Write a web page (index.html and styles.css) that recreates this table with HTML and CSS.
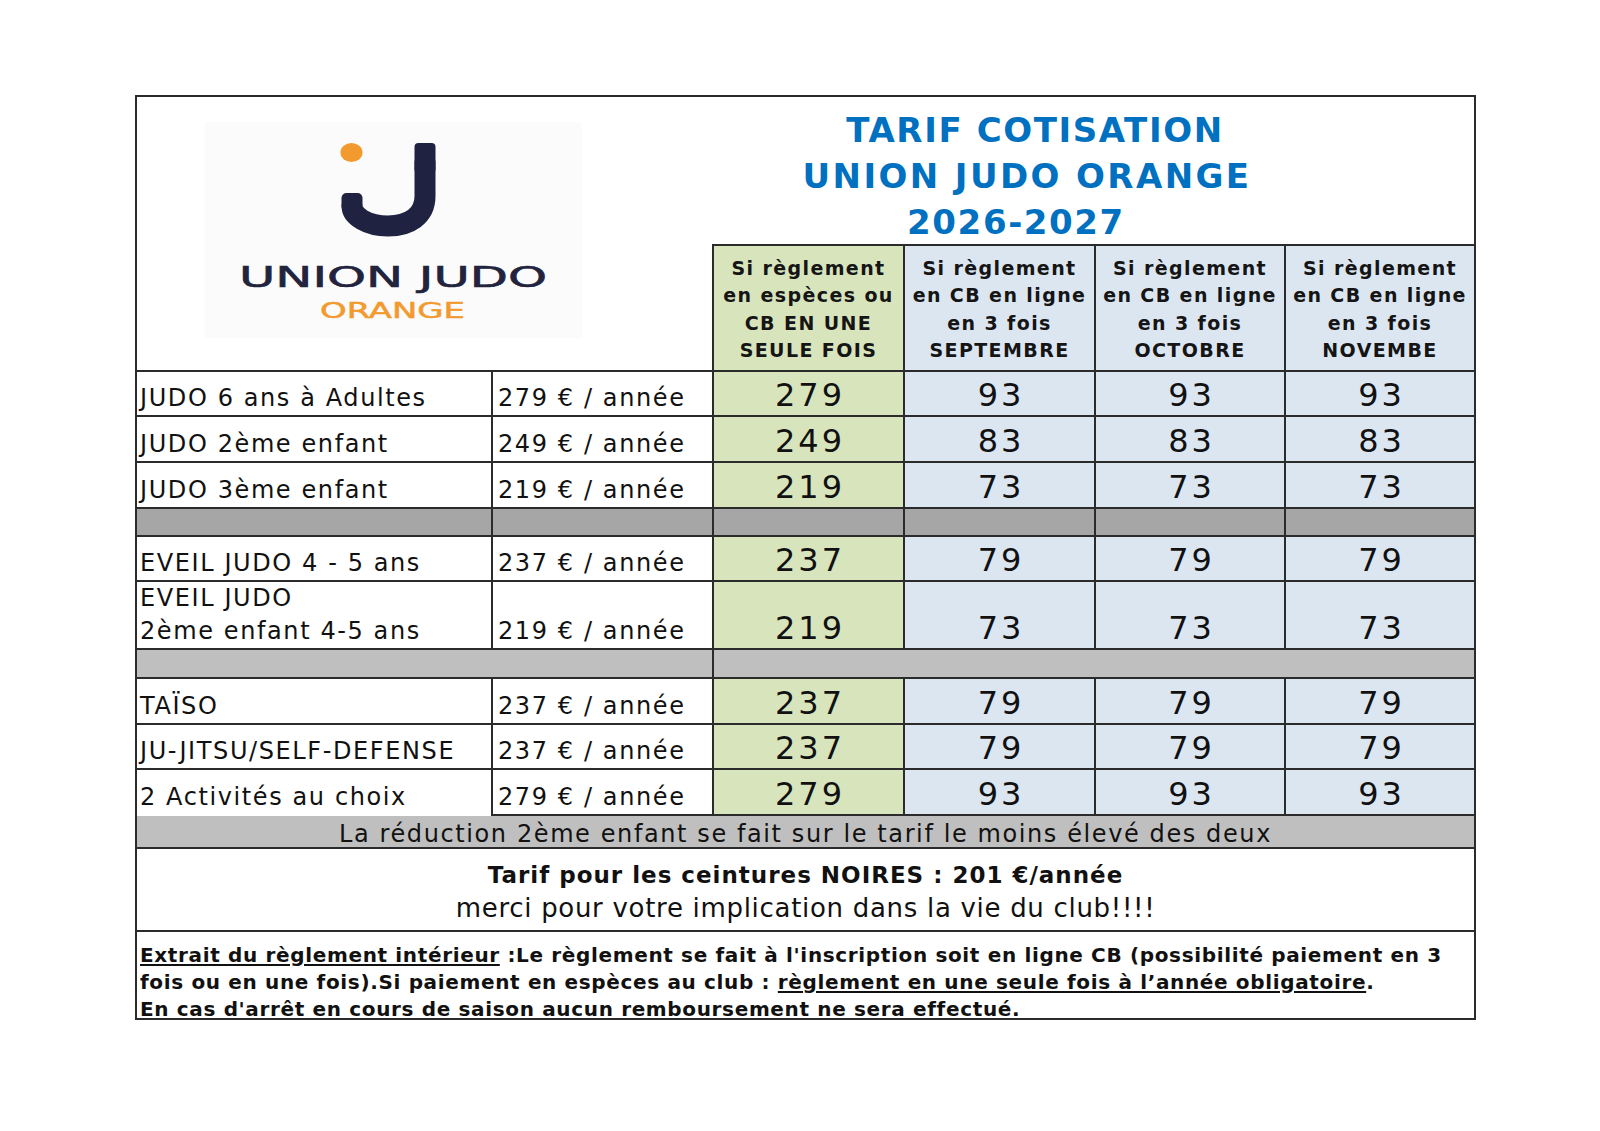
FILE: index.html
```html
<!DOCTYPE html>
<html lang="fr">
<head>
<meta charset="utf-8">
<title>Tarif cotisation Union Judo Orange 2026-2027</title>
<link rel="stylesheet" href="styles.css">
</head>
<body>
<div class="page">
  <div class="sheet">
    <div class="logo-cell">
      <div class="logo">
        <svg class="logo-svg" width="377" height="216" viewBox="0 0 377 216" aria-label="Union Judo Orange">
          <ellipse cx="146.5" cy="30.5" rx="11" ry="9.5" fill="#f29a2e"/>
          <path d="M220 40 V74 C220 94 204 104 183 104 C162 104 147 94 147 84" fill="none" stroke="#1f2240" stroke-width="21" stroke-linecap="round"/>
          <rect x="209.5" y="21" width="21" height="30" rx="4" fill="#1f2240"/>
          <rect x="136.5" y="71" width="21" height="18" rx="5" fill="#1f2240"/>
          <text x="34" y="165" font-family="DejaVu Sans, sans-serif" font-weight="400" font-size="29" textLength="308" lengthAdjust="spacingAndGlyphs" fill="#22243d" stroke="#22243d" stroke-width="0.6">UNION JUDO</text>
          <text x="115" y="196" font-family="DejaVu Sans, sans-serif" font-weight="400" font-size="21" textLength="145" lengthAdjust="spacingAndGlyphs" fill="#f29a2e" stroke="#f29a2e" stroke-width="0.5">ORANGE</text>
        </svg>
      </div>
    </div>
    <div class="title-cell">
      <div class="t1">TARIF COTISATION</div>
      <div class="t2">UNION JUDO ORANGE</div>
      <div class="t3">2026-2027</div>
    </div>

    <div class="hd green">Si règlement<br>en espèces ou<br>CB EN UNE<br>SEULE FOIS</div>
    <div class="hd blue">Si règlement<br>en CB en ligne<br>en 3 fois<br>SEPTEMBRE</div>
    <div class="hd blue">Si règlement<br>en CB en ligne<br>en 3 fois<br>OCTOBRE</div>
    <div class="hd blue">Si règlement<br>en CB en ligne<br>en 3 fois<br>NOVEMBE</div>

    <div class="lbl">JUDO 6 ans à Adultes</div>
    <div class="lbl price">279 € / année</div>
    <div class="num green">279</div>
    <div class="num blue">93</div>
    <div class="num blue">93</div>
    <div class="num blue">93</div>

    <div class="lbl">JUDO 2ème enfant</div>
    <div class="lbl price">249 € / année</div>
    <div class="num green">249</div>
    <div class="num blue">83</div>
    <div class="num blue">83</div>
    <div class="num blue">83</div>

    <div class="lbl">JUDO 3ème enfant</div>
    <div class="lbl price">219 € / année</div>
    <div class="num green">219</div>
    <div class="num blue">73</div>
    <div class="num blue">73</div>
    <div class="num blue">73</div>

    <div class="sep-dark"></div>
    <div class="sep-dark"></div>
    <div class="sep-dark"></div>
    <div class="sep-dark"></div>
    <div class="sep-dark"></div>
    <div class="sep-dark"></div>

    <div class="lbl">EVEIL JUDO 4 - 5 ans</div>
    <div class="lbl price">237 € / année</div>
    <div class="num green">237</div>
    <div class="num blue">79</div>
    <div class="num blue">79</div>
    <div class="num blue">79</div>

    <div class="lbl"><span>EVEIL JUDO</span><span>2ème enfant 4-5 ans</span></div>
    <div class="lbl price">219 € / année</div>
    <div class="num green">219</div>
    <div class="num blue">73</div>
    <div class="num blue">73</div>
    <div class="num blue">73</div>

    <div class="sep-light span-left"></div>
    <div class="sep-light span-right"></div>

    <div class="lbl">TAÏSO</div>
    <div class="lbl price">237 € / année</div>
    <div class="num green">237</div>
    <div class="num blue">79</div>
    <div class="num blue">79</div>
    <div class="num blue">79</div>

    <div class="lbl">JU-JITSU/SELF-DEFENSE</div>
    <div class="lbl price">237 € / année</div>
    <div class="num green">237</div>
    <div class="num blue">79</div>
    <div class="num blue">79</div>
    <div class="num blue">79</div>

    <div class="lbl last-lbl">2 Activités au choix</div>
    <div class="lbl price">279 € / année</div>
    <div class="num green">279</div>
    <div class="num blue">93</div>
    <div class="num blue">93</div>
    <div class="num blue">93</div>

    <div class="band">La réduction 2ème enfant se fait sur le tarif le moins élevé des deux</div>

    <div class="noires">
      <div class="noires-main">Tarif pour les ceintures NOIRES : 201 €/année</div>
      <div class="noires-thanks">merci pour votre implication dans la vie du club!!!!</div>
    </div>

    <div class="extract">
      <div><u>Extrait du règlement intérieur</u> :Le règlement se fait à l'inscription soit en ligne CB (possibilité paiement en 3</div>
      <div>fois ou en une fois).Si paiement en espèces au club : <u>règlement en une seule fois à l’année obligatoire</u>.</div>
      <div>En cas d'arrêt en cours de saison aucun remboursement ne sera effectué.</div>
    </div>
  </div>
</div>
</body>
</html>
```

FILE: styles.css
```css
html, body {
  margin: 0;
  padding: 0;
  background: #ffffff;
}

body {
  font-family: "DejaVu Sans", "Liberation Sans", sans-serif;
  color: #111111;
}

.page {
  padding: 95px 0 0 135px;
}

.sheet {
  display: grid;
  width: max-content;
  grid-template-columns: 354px 219px 189px 189px 188px 188px;
  grid-template-rows: 147px 124px 43px 44px 44px 26px 43px 66px 27px 44px 43px 44px 31px 81px 86px;
  gap: 2px;
  padding: 2px;
  background: #2b2b2b;
}

.sheet > div {
  background: #ffffff;
  min-width: 0;
}

/* logo */
.logo-cell {
  grid-column: 1 / 3;
  grid-row: 1 / 3;
  padding: 25px 0 0 68px;
}

.logo {
  width: 377px;
  height: 216px;
  background: #fbfbfb;
}

.logo-svg {
  display: block;
}

/* title */
.title-cell {
  grid-column: 3 / 7;
  grid-row: 1;
  margin-left: -2px;
  padding: 10px 132px 0 0;
  text-align: center;
  color: #0070c0;
  font-weight: 700;
  font-size: 34px;
  line-height: 46px;
  letter-spacing: 1.6px;
  white-space: nowrap;
}

.t1 {
  padding-left: 16px;
}

.t2 {
  letter-spacing: 2.4px;
}

.t3 {
  padding-right: 22px;
}

/* header cells */
.hd {
  padding-top: 9px;
  text-align: center;
  font-weight: 700;
  font-size: 19px;
  line-height: 27.3px;
  letter-spacing: 1.4px;
  white-space: nowrap;
  color: #151515;
}

.sheet > .green {
  background: #d8e4bc;
}

.sheet > .blue {
  background: #dce6f1;
}

/* data rows */
.lbl {
  display: flex;
  flex-direction: column;
  justify-content: flex-end;
  padding: 0 0 0 3px;
  font-size: 24px;
  line-height: 33px;
  letter-spacing: 1.6px;
  white-space: nowrap;
}

.price {
  padding-left: 5px;
}

.last-lbl {
  margin-bottom: -2px;
  padding-bottom: 2px;
}

.num {
  display: flex;
  align-items: flex-end;
  justify-content: center;
  padding: 0 0 3px 3px;
  font-size: 32px;
  line-height: 34px;
  letter-spacing: 3px;
}

.sheet > .sep-dark {
  background: #a6a6a6;
}

.sheet > .sep-light {
  background: #bfbfbf;
}

.span-left {
  grid-column: span 2;
}

.span-right {
  grid-column: span 4;
}

/* bottom */
.sheet > .band {
  grid-column: 1 / 7;
  background: #bfbfbf;
  display: flex;
  align-items: center;
  justify-content: center;
  padding-top: 5px;
  font-size: 24px;
  line-height: 26px;
  letter-spacing: 1.6px;
  white-space: nowrap;
}

.noires {
  grid-column: 1 / 7;
  padding-top: 10px;
  text-align: center;
  line-height: 32.7px;
  white-space: nowrap;
}

.noires-main {
  font-weight: 700;
  font-size: 23px;
  letter-spacing: 1px;
}

.noires-thanks {
  font-size: 26px;
  letter-spacing: 0.7px;
}

.extract {
  grid-column: 1 / 7;
  padding: 10px 0 0 3px;
  font-weight: 700;
  font-size: 20px;
  line-height: 27px;
  letter-spacing: 0.65px;
  white-space: nowrap;
}

.extract u {
  text-underline-offset: 2px;
}
```
